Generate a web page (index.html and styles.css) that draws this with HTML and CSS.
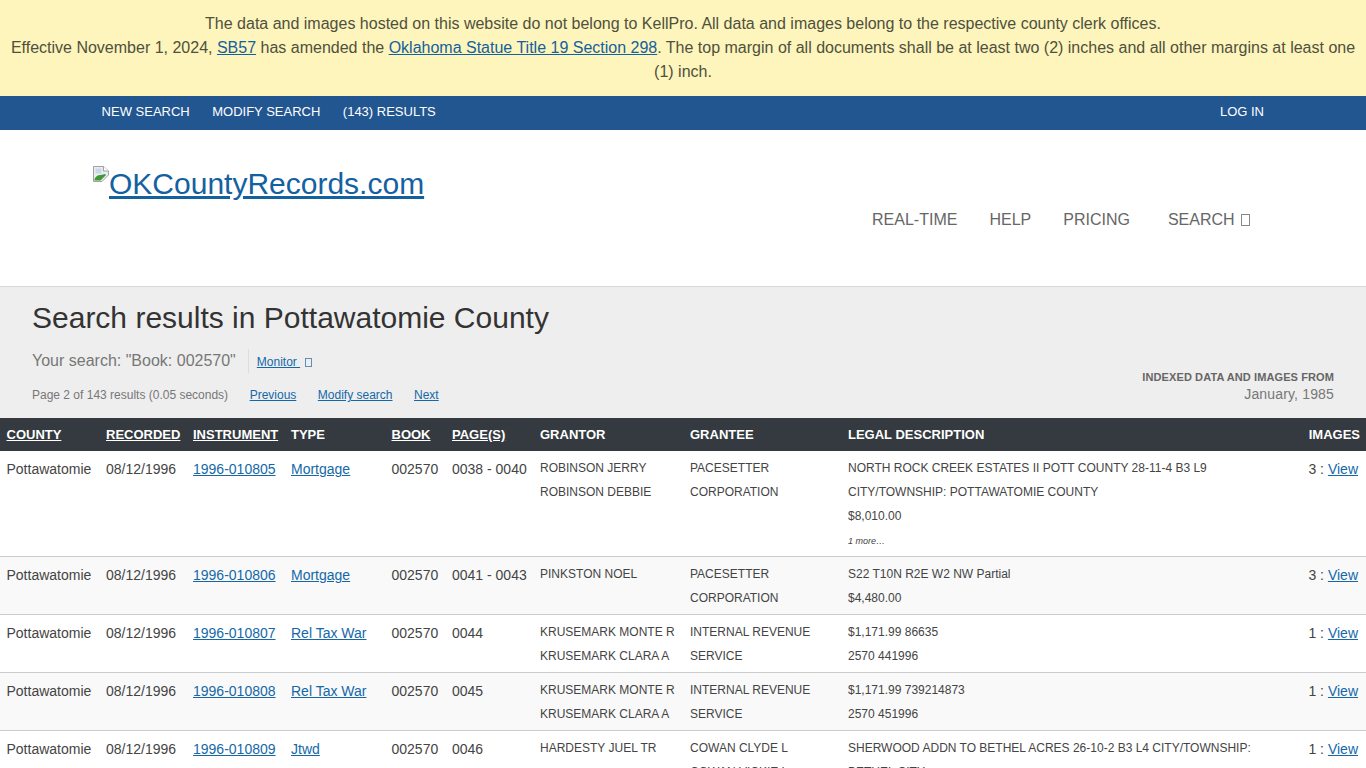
FILE: index.html
```html
<!DOCTYPE html>
<html lang="en">
<head>
<meta charset="utf-8">
<title>Search results in Pottawatomie County</title>
<link rel="stylesheet" href="styles.css">
</head>
<body>
<div class="notice">
  <div>The data and images hosted on this website do not belong to KellPro. All data and images belong to the respective county clerk offices.</div>
  <div>Effective November 1, 2024, <a href="#">SB57</a> has amended the <a href="#">Oklahoma Statue Title 19 Section 298</a>. The top margin of all documents shall be at least two (2) inches and all other margins at least one (1) inch.</div>
</div>
<nav class="topbar">
  <div class="topbar-left">
    <a href="#">NEW SEARCH</a>
    <a href="#">MODIFY SEARCH</a>
    <a href="#">(143) RESULTS</a>
  </div>
  <a href="#" class="login">LOG IN</a>
</nav>
<header class="masthead">
  <a href="#" class="logo"><svg class="broken" width="16" height="16" viewBox="0 0 16 16"><path d="M.5 .5H10.500L15.500 5V9L9 15.500H.5Z" fill="#e9edf2" stroke="#a0a0a0"/><path d="M10.500 .5V5H15.500" fill="#fff" stroke="#a0a0a0"/><path d="M1.500 14.500V13C3 10 5.500 8.500 8 9L12 8 13 9 7.500 14.500Z" fill="#3f9a35"/><path d="M2.500 2.500h6v5h-6z" fill="#c9d8e8"/></svg>OKCountyRecords.com</a>
  <div class="mainnav">
    <a href="#">REAL-TIME</a>
    <a href="#">HELP</a>
    <a href="#">PRICING</a>
    <a href="#" class="search-link">SEARCH <span class="tofu"></span></a>
  </div>
</header>
<section class="summary">
  <h1>Search results in Pottawatomie County</h1>
  <div class="search-line">
    <span class="search-term">Your search: "Book: 002570"</span>
    <a href="#" class="monitor"><span class="monitor-text">Monitor&nbsp;</span><span class="tofu small"></span></a>
  </div>
  <div class="summary-foot">
    <div class="pager">
      <span>Page 2 of 143 results (0.05 seconds)</span>
      <a href="#">Previous</a>
      <a href="#">Modify search</a>
      <a href="#">Next</a>
    </div>
    <div class="indexed">
      <strong>INDEXED DATA AND IMAGES FROM</strong>
      <span>January, 1985</span>
    </div>
  </div>
</section>
<table class="results">
  <colgroup>
    <col class="c-county"><col class="c-recorded"><col class="c-instrument"><col class="c-type"><col class="c-book"><col class="c-pages"><col class="c-grantor"><col class="c-grantee"><col><col class="c-images">
  </colgroup>
  <thead>
    <tr>
      <th><a href="#">COUNTY</a></th><th><a href="#">RECORDED</a></th><th><a href="#">INSTRUMENT</a></th><th>TYPE</th><th><a href="#">BOOK</a></th><th><a href="#">PAGE(S)</a></th><th>GRANTOR</th><th>GRANTEE</th><th>LEGAL DESCRIPTION</th><th class="right">IMAGES</th>
    </tr>
  </thead>
  <tbody>
    <tr>
      <td>Pottawatomie</td><td>08/12/1996</td><td><a href="#">1996-010805</a></td><td><a href="#">Mortgage</a></td><td>002570</td><td>0038 - 0040</td>
      <td class="small-cell">ROBINSON JERRY<br>ROBINSON DEBBIE</td>
      <td class="small-cell">PACESETTER CORPORATION</td>
      <td class="small-cell">NORTH ROCK CREEK ESTATES II POTT COUNTY 28-11-4 B3 L9<br>CITY/TOWNSHIP: POTTAWATOMIE COUNTY<br>$8,010.00<em class="more">1 more…</em></td>
      <td class="right">3 : <a href="#">View</a></td>
    </tr>
    <tr>
      <td>Pottawatomie</td><td>08/12/1996</td><td><a href="#">1996-010806</a></td><td><a href="#">Mortgage</a></td><td>002570</td><td>0041 - 0043</td>
      <td class="small-cell">PINKSTON NOEL</td>
      <td class="small-cell">PACESETTER CORPORATION</td>
      <td class="small-cell">S22 T10N R2E W2 NW Partial<br>$4,480.00</td>
      <td class="right">3 : <a href="#">View</a></td>
    </tr>
    <tr>
      <td>Pottawatomie</td><td>08/12/1996</td><td><a href="#">1996-010807</a></td><td><a href="#">Rel Tax War</a></td><td>002570</td><td>0044</td>
      <td class="small-cell">KRUSEMARK MONTE R<br>KRUSEMARK CLARA A</td>
      <td class="small-cell">INTERNAL REVENUE SERVICE</td>
      <td class="small-cell">$1,171.99 86635<br>2570 441996</td>
      <td class="right">1 : <a href="#">View</a></td>
    </tr>
    <tr>
      <td>Pottawatomie</td><td>08/12/1996</td><td><a href="#">1996-010808</a></td><td><a href="#">Rel Tax War</a></td><td>002570</td><td>0045</td>
      <td class="small-cell">KRUSEMARK MONTE R<br>KRUSEMARK CLARA A</td>
      <td class="small-cell">INTERNAL REVENUE SERVICE</td>
      <td class="small-cell">$1,171.99 739214873<br>2570 451996</td>
      <td class="right">1 : <a href="#">View</a></td>
    </tr>
    <tr>
      <td>Pottawatomie</td><td>08/12/1996</td><td><a href="#">1996-010809</a></td><td><a href="#">Jtwd</a></td><td>002570</td><td>0046</td>
      <td class="small-cell">HARDESTY JUEL TR</td>
      <td class="small-cell">COWAN CLYDE L<br>COWAN VICKIE L</td>
      <td class="small-cell">SHERWOOD ADDN TO BETHEL ACRES 26-10-2 B3 L4 CITY/TOWNSHIP: BETHEL CITY</td>
      <td class="right">1 : <a href="#">View</a></td>
    </tr>
  </tbody>
</table>
</body>
</html>
```
FILE: styles.css
```css
* { box-sizing: border-box; }
html, body { margin: 0; padding: 0; }
body {
  font-family: "Liberation Sans", Arial, sans-serif;
  font-size: 14px;
  color: #444;
  background: #fff;
  overflow-x: hidden;
}
a { color: #1468a8; }

.notice {
  background: #fdf5bc;
  color: #50503c;
  font-size: 16px;
  line-height: 24px;
  padding: 12px 8px;
  text-align: center;
}
.notice a { color: #14619f; }

.topbar {
  height: 34px;
  background: #225691;
  display: flex;
  align-items: center;
  justify-content: space-between;
  padding: 0 102px 3px 101.6px;
}
.topbar a { color: #fff; text-decoration: none; font-size: 13px; }
.topbar-left { display: flex; gap: 22.5px; }

.masthead {
  height: 157px;
  border-bottom: 1px solid #d9d9d9;
  display: flex;
  justify-content: space-between;
  padding: 36px 116px 0 93px;
}
.logo {
  font-size: 30px;
  line-height: 36px;
  color: #14619f;
  display: block;
  height: 36px;
  white-space: nowrap;
}
.broken { vertical-align: 12px; }
.mainnav {
  display: flex;
  gap: 32px;
  padding-top: 45px;
  font-size: 16px;
  line-height: 18px;
}
.mainnav a { color: #666; text-decoration: none; white-space: nowrap; }
.search-link { margin-left: 6px; }
.tofu {
  display: inline-block;
  width: 9px;
  height: 12px;
  border: 1px solid #888;
  margin-left: 2px;
  vertical-align: -1px;
}
.tofu.small { width: 7px; height: 9px; border-color: #5f8fb8; margin-left: 5px; vertical-align: -1px; }

.summary {
  background: #eee;
  height: 131px;
  padding: 13px 32px 0;
}
h1 {
  margin: 0;
  font-size: 30px;
  font-weight: 400;
  line-height: 36px;
  color: #333;
}
.search-line {
  display: flex;
  align-items: center;
  margin-top: 13px;
  height: 24px;
}
.search-term { font-size: 16px; color: #777; padding-right: 12px; border-right: 1px solid #ddd; line-height: 24px; }
.monitor { font-size: 12px; margin-left: 8px; text-decoration: none; padding-top: 2px; }
.monitor-text { text-decoration: underline; }
.summary-foot {
  display: flex;
  justify-content: space-between;
  align-items: flex-end;
  margin-top: 12px;
}
.pager { font-size: 12px; color: #777; display: flex; gap: 21.5px; line-height: 20px; padding-bottom: 1px; }
.indexed { display: flex; flex-direction: column; align-items: flex-end; margin-top: -20px; margin-bottom: 3px; }
.indexed strong { font-size: 11px; color: #666; line-height: 16px; letter-spacing: .1px; }
.indexed span { font-size: 14px; color: #777; line-height: 18px; letter-spacing: .16px; }

.results {
  width: 100%;
  border-collapse: separate;
  border-spacing: 0;
  table-layout: fixed;
}
.c-county { width: 99.5px; }
.c-recorded { width: 87px; }
.c-instrument { width: 98px; }
.c-type { width: 100.5px; }
.c-book { width: 60.5px; }
.c-pages { width: 88px; }
.c-grantor { width: 150px; }
.c-grantee { width: 158px; }
.c-images { width: 66px; }
th {
  background: #343a3f;
  color: #fff;
  font-size: 13px;
  font-weight: 700;
  text-align: left;
  height: 33px;
  padding: 0 6.500px 1px;
  white-space: nowrap;
}
th a { color: #fff; }
td {
  vertical-align: top;
  padding: 6px 6.500px 4px;
  font-size: 14px;
  line-height: 24px;
  color: #444;
  border-bottom: 1px solid #ccc;
}
tbody tr:nth-child(even) td { background: #f9f9f9; }
.small-cell { font-size: 12px; padding-top: 5px; padding-bottom: 4px; color: #444; }
.more { display: block; font-size: 9px; line-height: 26px; height: 24px; }
.right { text-align: right; padding-left: 0; padding-right: 8px; }
th.right { padding-right: 6px; }
```
